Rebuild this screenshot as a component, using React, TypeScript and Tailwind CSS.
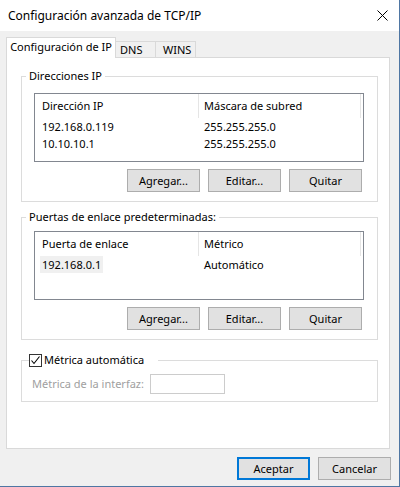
const font = { fontFamily: '"Noto Sans", "Liberation Sans", sans-serif' };

function WinButton({ label, primary }: { label: string; primary?: boolean }) {
  return (
    <div
      className={
        "w-[73px] h-[23px] flex items-center justify-center bg-[#e1e1e1] text-black " +
        (primary ? "border-2 border-[#0078d7]" : "border border-[#adadad]")
      }
    >
      {label}
    </div>
  );
}

function ListView({
  cols,
  rows,
  highlightFirst,
}: {
  cols: [string, string];
  rows: [string, string][];
  highlightFirst?: boolean;
}) {
  return (
    <div className="ml-[12px] w-[330px] h-[69px] border border-[#828790] bg-white">
      <div className="flex h-[24px] items-center">
        <div className="w-[163px] h-full flex items-center pl-[7px]">{cols[0]}</div>
        <div className="w-px h-full bg-[#e5e5e5]" />
        <div className="w-[161px] h-full flex items-center pl-[5px]">{cols[1]}</div>
        <div className="w-px h-full bg-[#e5e5e5]" />
      </div>
      {rows.map((r, i) => (
        <div key={i} className="flex h-[17px] items-center">
          <div className="w-[164px] flex items-center pl-[5px]">
            <span className={"px-[2px] leading-[17px] " + (highlightFirst && i === 0 ? "bg-[#f0f0f0]" : "")}>
              {r[0]}
            </span>
          </div>
          <div className="pl-[5px]">{r[1]}</div>
        </div>
      ))}
    </div>
  );
}

function ButtonRow() {
  return (
    <div className="mt-[7px] ml-[105px] flex gap-[8px]">
      <WinButton label="Agregar..." />
      <WinButton label="Editar..." />
      <WinButton label="Quitar" />
    </div>
  );
}

export default function App() {
  return (
    <div
      className="w-[400px] h-[487px] bg-[#f0f0f0] border-r border-b border-[#4f76a3] flex flex-col text-[11px] leading-[16px] text-black"
      style={font}
    >
      {/* title bar */}
      <div className="h-[31px] bg-white flex items-center justify-between pl-[8px] pr-[11px]">
        <span className="text-[12px]">Configuración avanzada de TCP/IP</span>
        <svg width="11" height="11" viewBox="0 0 11 11">
          <path d="M0.5 0.5 L10.5 10.5 M10.5 0.5 L0.5 10.5" stroke="#000" strokeWidth="1" />
        </svg>
      </div>

      <div className="pl-[6px] pt-[6px]">
        {/* tabs */}
        <div className="flex items-end h-[21px] -mb-px relative z-10">
          <div className="w-[110px] h-[21px] bg-white border border-b-0 border-[#d9d9d9] flex items-center justify-center pb-[2px]">
            Configuración de IP
          </div>
          <div className="-ml-px w-[41px] h-[17px] border border-b-0 border-[#d9d9d9] flex items-center pl-[4px]">
            DNS
          </div>
          <div className="-ml-px w-[41px] h-[17px] border border-b-0 border-[#d9d9d9] flex items-center pl-[7px]">
            WINS
          </div>
        </div>

        {/* tab panel */}
        <div className="w-[384px] h-[392px] bg-white border border-[#d9d9d9] pt-[10px] pl-[14px]">
          <fieldset className="w-[357px] border border-[#dcdcdc] pb-[9px]">
            <legend className="ml-[4px] px-[3px]">Direcciones IP</legend>
            <div className="mt-[9px]">
              <ListView
                cols={["Dirección IP", "Máscara de subred"]}
                rows={[
                  ["192.168.0.119", "255.255.255.0"],
                  ["10.10.10.1", "255.255.255.0"],
                ]}
              />
            </div>
            <ButtonRow />
          </fieldset>

          <fieldset className="mt-[7px] w-[357px] border border-[#dcdcdc] pb-[9px]">
            <legend className="ml-[4px] px-[3px]">Puertas de enlace predeterminadas:</legend>
            <div className="mt-[6px]">
              <ListView
                cols={["Puerta de enlace", "Métrico"]}
                rows={[["192.168.0.1", "Automático"]]}
                highlightFirst
              />
            </div>
            <ButtonRow />
          </fieldset>

          <fieldset className="mt-[12px] w-[357px] border border-[#dcdcdc] pb-[7px]">
            <legend className="ml-[7px] pr-[14px] flex items-center gap-[2px]">
              <span className="w-[13px] h-[13px] border border-[#333333] bg-white flex items-center justify-center">
                <svg width="11" height="11" viewBox="0 0 11 11">
                  <path d="M1.5 5.5 L4 8.5 L9.5 1.5" stroke="#000" strokeWidth="1.1" fill="none" />
                </svg>
              </span>
              <span>Métrica automática</span>
            </legend>
            <div className="mt-[6px] flex items-center">
              <span className="ml-[10px] w-[118px] text-[#a0a0a0]">Métrica de la interfaz:</span>
              <div className="w-[75px] h-[20px] border border-[#cccccc] bg-white" />
            </div>
          </fieldset>
        </div>

        {/* dialog buttons */}
        <div className="mt-[8px] ml-[231px] flex gap-[8px]">
          <WinButton label="Aceptar" primary />
          <WinButton label="Cancelar" />
        </div>
      </div>
    </div>
  );
}
